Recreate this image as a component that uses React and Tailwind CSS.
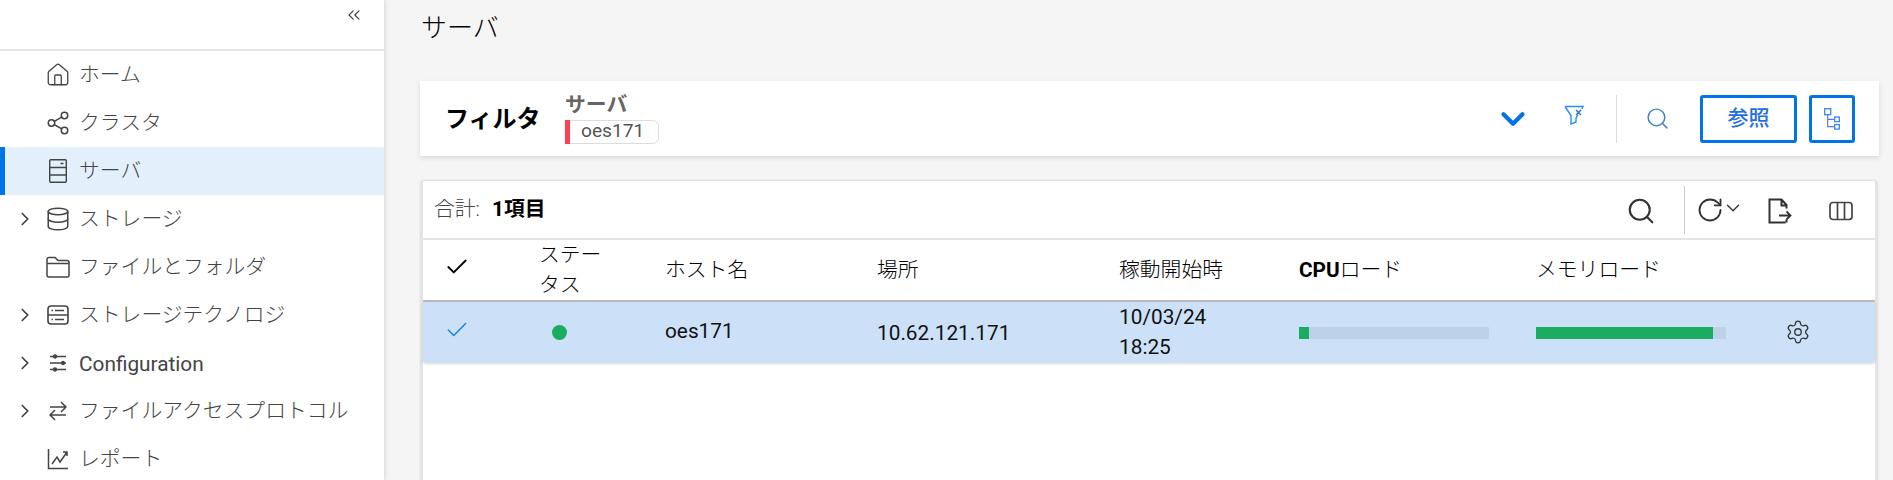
import React from 'react';
import { Check, ChevronDown, ChevronRight, ChevronsLeft, Database, House, RotateCw, Search, Settings, Share2 } from 'lucide-react';

const ServerIcon = () => (
    <svg width="24" height="26" viewBox="0 0 24 26" fill="none" stroke="#444" strokeWidth="1.4">
        <rect x="3.700" y="1.700" width="16.600" height="22.600" rx="1" />
        <path d="M3.700 9.500h16.600M3.700 17h16.600M14.500 5.500h3" />
    </svg>
);

const FolderIcon = () => (
    <svg width="24" height="22" viewBox="0 0 24 22" fill="none" stroke="#444" strokeWidth="1.500">
        <path d="M1 3.500a2 2 0 0 1 2-2h6l3 3h9a2 2 0 0 1 2 2v12.500a2 2 0 0 1-2 2H3a2 2 0 0 1-2-2zM1 7.500h22" />
    </svg>
);

const StorageTechIcon = () => (
    <svg width="24" height="22" viewBox="0 0 24 22" fill="none" stroke="#444" strokeWidth="1.600">
        <rect x="2" y="2" width="20" height="18" rx="3" />
        <path d="M2 11h20M5.500 6.500h1.500M9 6.500h9M5.500 15.500h1.500M9 15.500h9" />
    </svg>
);

const SlidersIcon = () => (
    <svg width="18" height="20" viewBox="0 0 18 20" stroke="#444" strokeWidth="1.300" fill="#444">
        <path d="M1 3.500h16M1 10h16M1 16.500h16" />
        <circle cx="6" cy="3.500" r="1.500" />
        <circle cx="14" cy="10" r="1.500" />
        <circle cx="6" cy="16.500" r="1.500" />
    </svg>
);

const ArrowsIcon = () => (
    <svg width="18" height="22" viewBox="0 0 18 22" fill="none" stroke="#444" strokeWidth="1.500">
        <path d="M1 7h16M12 2l5 5-5 5M17 15H1M6 10l-5 5 5 5" />
    </svg>
);

const ReportIcon = () => (
    <svg width="22" height="22" viewBox="0 0 22 22" fill="none" stroke="#444" strokeWidth="1.500">
        <path d="M1.500 1v19.500H21" />
        <path d="M5 16l5-7 3 5 7-10M16 4h4v4" />
    </svg>
);

const FilterClearIcon = () => (
    <svg width="20" height="20" viewBox="0 0 20 20" fill="none" stroke="#2f8cf2" strokeWidth="1.400">
        <path d="M1 1.500h18L18 4M1 1.500L7 10.500V19l5-2v-4l2-3" />
        <path d="M12 5l5 5M17 5l-5 5" stroke="#1f6fd0" />
    </svg>
);

const TreeIcon = () => (
    <svg width="16" height="22" viewBox="0 0 16 22" fill="none" stroke="#3b86ee" strokeWidth="1.300">
        <path d="M3.700 6.700v12h7M3.700 11.300h7" stroke="#5a78e8" strokeWidth="1.200" />
        <rect x="0.700" y="0.700" width="6" height="6" />
        <rect x="10.700" y="9" width="4.600" height="4.600" />
        <rect x="10.700" y="16.500" width="4.600" height="4.600" />
    </svg>
);

const FileExportIcon = () => (
    <svg width="26" height="26" viewBox="0 0 26 26" fill="none" stroke="#333" strokeWidth="2">
        <path d="M18.500 24.500H2.500V1.500h12l5 5.500v3.500M14.500 2v5.500h5M19.500 21.500v3" />
        <path d="M12 17.500h11.500M19.500 13.500l4 4-4 4" strokeWidth="1.800" />
    </svg>
);

const ColumnsIcon = () => (
    <svg width="26" height="22" viewBox="0 0 26 22" fill="none" stroke="#444" strokeWidth="1.700">
        <rect x="2" y="2.500" width="22" height="17" rx="3" />
        <path d="M9.500 2.500v17M16.500 2.500v17" />
    </svg>
);

const menuItems = [
    { label: 'ホーム', icon: <House size={32} strokeWidth={1.2} />, textClass: 'font-light mt-[2px]' },
    { label: 'クラスタ', icon: <Share2 size={28} strokeWidth={1.4} />, textClass: 'font-light mt-[2px]' },
    { label: 'サーバ', icon: <ServerIcon />, active: true, textClass: 'font-light mt-[2px]' },
    { label: 'ストレージ', icon: <Database size={26} strokeWidth={1.4} />, expand: true, textClass: 'font-light mt-[2px]' },
    { label: 'ファイルとフォルダ', icon: <FolderIcon />, textClass: 'font-light mt-[2px]' },
    { label: 'ストレージテクノロジ', icon: <StorageTechIcon />, expand: true, textClass: 'font-light mt-[2px]' },
    { label: 'Configuration', icon: <SlidersIcon />, expand: true, textClass: 'mt-[4px]' },
    { label: 'ファイルアクセスプロトコル', icon: <ArrowsIcon />, expand: true, textClass: 'font-light mt-[2px]' },
    { label: 'レポート', icon: <ReportIcon />, textClass: 'font-light mt-[2px]' },
];

const SidebarItem = ({ item }) => (
    <div className={`h-12 flex items-center text-[#444] border-l-[5px] ${item.active ? 'bg-[#e3f0fc] border-[#0073e7]' : 'border-transparent'}`}>
        <div className="w-[40px] flex justify-center">
            {item.expand && <ChevronRight size={22} strokeWidth={1.9} />}
        </div>
        <div className="w-[26px] flex justify-center">{item.icon}</div>
        <span className={`ml-[8px] text-[20.8px] whitespace-nowrap ${item.textClass}`}>{item.label}</span>
    </div>
);

const Bar = ({ pct }) => (
    <div className="w-[190px] h-3 bg-[#bcd2e8]">
        <div className="h-full bg-[#1aac60]" style={{ width: `${pct}%` }} />
    </div>
);

const gridCols = 'grid grid-cols-[116px_126px_212px_242px_180px_237px_190px_1fr]';

const App = () => {
    return (
        <div className="h-[480px] w-[1893px] overflow-hidden flex bg-[#f5f5f5] font-['Roboto','Noto_Sans_CJK_JP',sans-serif]">
            <aside className="w-[384px] shrink-0 bg-white shadow-[1px_0_4px_rgba(0,0,0,0.12)]">
                <div className="h-[51px] border-b-2 border-[#e4e4e4] flex justify-end items-start pr-[20px] pt-[5px] text-[#444]">
                    <ChevronsLeft size={20} strokeWidth={1.5} />
                </div>
                {menuItems.map((item) => (
                    <SidebarItem key={item.label} item={item} />
                ))}
            </aside>

            <main className="flex-1 min-w-0 pl-[36px] pr-[14px]">
                <h1 className="h-[81px] pt-[10px] pl-[1px] text-[26px] leading-[36px] font-light text-black">サーバ</h1>

                <section className="h-[75px] bg-white shadow-[0_2px_5px_rgba(0,0,0,0.12)] flex items-center pl-[25px] pr-[24px]">
                    <span className="w-[120px] text-[24px] font-bold text-black">フィルタ</span>
                    <div className="flex flex-col">
                        <span className="-mt-[1px] text-[20.8px] leading-[24px] font-bold text-[#666]">サーバ</span>
                        <div className="mt-[3px] flex h-6 w-[94px] items-center border border-[#ddd] rounded-r-md">
                            <div className="w-[5px] h-6 bg-[#ff4053] -ml-px" />
                            <span className="ml-[11px] text-[19.2px] text-[#555]">oes171</span>
                        </div>
                    </div>
                    <div className="flex-1" />
                    <ChevronDown size={38} strokeWidth={2.7} className="text-[#0073e7]" />
                    <div className="ml-[32px] -mt-[8px]"><FilterClearIcon /></div>
                    <div className="ml-[32px] w-px h-12 bg-[#ddd]" />
                    <Search size={25} strokeWidth={1.4} className="ml-[28px] text-[#3b82c8]" />
                    <button className="ml-[30px] w-[97px] h-12 border-[3px] border-[#0073e7] rounded-[3px] text-[21px] font-medium text-[#1f6fe0]">参照</button>
                    <button className="ml-[12px] w-[46px] h-12 border-[3px] border-[#0073e7] rounded-[3px] flex items-center justify-center"><TreeIcon /></button>
                </section>

                <section className="mt-[25px] ml-[1px] mr-[2px] h-[320px] bg-white border-l-2 border-r-2 border-[#e4e4e4] shadow-[0_0_3px_rgba(0,0,0,0.2)] rounded-t-[3px]">
                    <div className="h-[59px] flex items-center border-b-2 border-[#e4e4e4] pl-[11px] pr-[21px]">
                        <span className="text-[20.8px] font-light text-[#444]">合計:</span>
                        <span className="ml-[12px] text-[20.8px] font-bold text-black">1項目</span>
                        <div className="flex-1" />
                        <Search size={30} strokeWidth={1.7} className="mt-[2px] text-[#333]" />
                        <div className="ml-[28px] w-px h-12 bg-[#ccc]" />
                        <RotateCw size={28} strokeWidth={1.6} className="ml-[11px] text-[#333]" />
                        <ChevronDown size={22} strokeWidth={1.5} className="-ml-[2px] -mt-[3px] text-[#333]" />
                        <div className="ml-[23px] mt-[2px]"><FileExportIcon /></div>
                        <div className="ml-[35px] mt-[2px]"><ColumnsIcon /></div>
                    </div>

                    <div className={`${gridCols} h-[62px] items-center border-b-2 border-[#bbb] text-[20.8px] leading-[30px] font-light text-black`}>
                        <Check size={26} strokeWidth={1.7} className="ml-[21px] -mt-[6px]" />
                        <div className="w-[70px]">ステータス</div>
                        <div>ホスト名</div>
                        <div className="-mt-[1px]">場所</div>
                        <div>稼動開始時</div>
                        <div><span className="font-bold">CPU</span>ロード</div>
                        <div>メモリロード</div>
                        <div />
                    </div>

                    <div className={`${gridCols} h-[61px] items-center bg-[#cce1f8] rounded-b-[3px] shadow-[0_1px_3px_rgba(0,0,0,0.15)] text-[20.8px] leading-[30px] text-[#111]`}>
                        <Check size={26} strokeWidth={1.4} className="ml-[21px] -mt-[6px] text-[#1f7fe8]" />
                        <div className="w-[15px] h-[15px] ml-[13px] rounded-full bg-[#1aac60]" />
                        <div className="-mt-[4px]">oes171</div>
                        <div>10.62.121.171</div>
                        <div className="-mt-[2px]">10/03/24<br />18:25</div>
                        <Bar pct={5} />
                        <Bar pct={93} />
                        <Settings size={26} strokeWidth={1.2} className="ml-[59px] -mt-[2px] text-[#333]" />
                    </div>
                </section>
            </main>
        </div>
    );
};

export default App;
